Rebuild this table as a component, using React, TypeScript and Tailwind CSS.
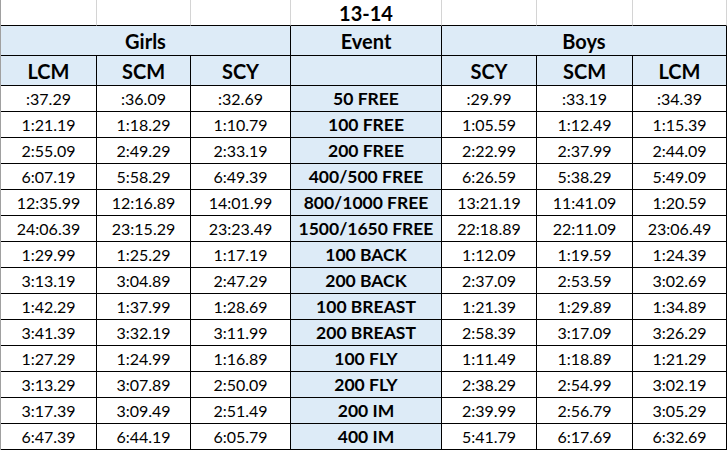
import React from 'react'

const rows: [string, string, string, string, string, string, string][] = [
    [':37.29', ':36.09', ':32.69', '50 FREE', ':29.99', ':33.19', ':34.39'],
    ['1:21.19', '1:18.29', '1:10.79', '100 FREE', '1:05.59', '1:12.49', '1:15.39'],
    ['2:55.09', '2:49.29', '2:33.19', '200 FREE', '2:22.99', '2:37.99', '2:44.09'],
    ['6:07.19', '5:58.29', '6:49.39', '400/500 FREE', '6:26.59', '5:38.29', '5:49.09'],
    ['12:35.99', '12:16.89', '14:01.99', '800/1000 FREE', '13:21.19', '11:41.09', '1:20.59'],
    ['24:06.39', '23:15.29', '23:23.49', '1500/1650 FREE', '22:18.89', '22:11.09', '23:06.49'],
    ['1:29.99', '1:25.29', '1:17.19', '100 BACK', '1:12.09', '1:19.59', '1:24.39'],
    ['3:13.19', '3:04.89', '2:47.29', '200 BACK', '2:37.09', '2:53.59', '3:02.69'],
    ['1:42.29', '1:37.99', '1:28.69', '100 BREAST', '1:21.39', '1:29.89', '1:34.89'],
    ['3:41.39', '3:32.19', '3:11.99', '200 BREAST', '2:58.39', '3:17.09', '3:26.29'],
    ['1:27.29', '1:24.99', '1:16.89', '100 FLY', '1:11.49', '1:18.89', '1:21.29'],
    ['3:13.29', '3:07.89', '2:50.09', '200 FLY', '2:38.29', '2:54.99', '3:02.19'],
    ['3:17.39', '3:09.49', '2:51.49', '200 IM', '2:39.99', '2:56.79', '3:05.29'],
    ['6:47.39', '6:44.19', '6:05.79', '400 IM', '5:41.79', '6:17.69', '6:32.69'],
]

const cell = 'flex items-center justify-center border-r border-b border-black'
const head = `${cell} bg-[#ddebf7] font-bold text-[20px]`

const App = () => {
    return (
        <div className="w-[728px] h-[450px] bg-white overflow-hidden">
            <div
                className="grid grid-cols-[96px_94px_100px_151px_95px_96px_94px] grid-rows-[26px_30px_30px_repeat(14,26px)] border-l border-[#a0a0a0] text-black"
                style={{ fontFamily: 'Lato, "Noto Sans", sans-serif' }}
            >
                {/* sheet row above the table */}
                {['', '', '', '13-14', '', '', ''].map((t, i) => (
                    <div
                        key={i}
                        className="flex items-center justify-center border-r border-r-[#d4d4d4] border-b border-b-black font-bold text-[20px] leading-none"
                    >
                        {t}
                    </div>
                ))}

                <div className={`${head} col-span-3`}>Girls</div>
                <div className={head}>Event</div>
                <div className={`${head} col-span-3`}>Boys</div>

                {['LCM', 'SCM', 'SCY', '', 'SCY', 'SCM', 'LCM'].map((t, i) => (
                    <div key={i} className={head}>{t}</div>
                ))}

                {rows.map((r) =>
                    r.map((v, i) =>
                        i === 3 ? (
                            <div key={r[3] + i} className={`${cell} bg-[#ddebf7] font-bold text-[17.5px] pt-px`}>
                                {v}
                            </div>
                        ) : (
                            <div key={r[3] + i} className={`${cell} text-[16px] pt-px`}>
                                {v}
                            </div>
                        )
                    )
                )}
            </div>
        </div>
    )
}

export default App
